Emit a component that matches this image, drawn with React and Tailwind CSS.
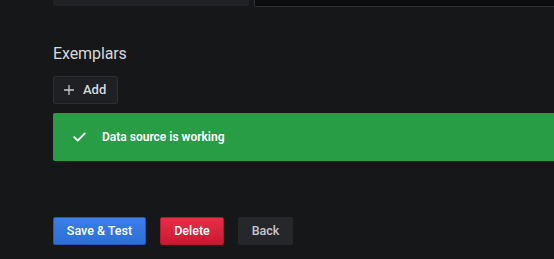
export default function App() {
  return (
    <div
      className="w-[554px] h-[259px] overflow-hidden bg-[#161719] text-[#d8d9da]"
      style={{ fontFamily: "Roboto, 'Liberation Sans', sans-serif" }}
    >
      <div className="flex pl-[53px] gap-[5px] h-[7px]">
        <div className="w-[196px] h-[6px] bg-[#202226] rounded-b-[2px]" />
        <div className="flex-1 h-[7px] bg-[#0b0c0e] border-l border-b border-[#2c2e33] rounded-bl-[2px]" />
      </div>

      <div className="px-[53px]">
        <h3 className="mt-[35px] text-[16px] leading-[24px] tracking-[-0.1px] text-[#d8d9da]">Exemplars</h3>

        <button className="mt-[10px] h-[28px] w-[65px] flex items-center gap-[8px] pl-[9px] bg-[#1f2024] border border-[#2c2e33] rounded-[2px] text-[13px] font-medium text-[#d8d9da]">
          <svg width="12" height="12" viewBox="0 0 12 12" fill="none" stroke="#c7c8cb" strokeWidth="1.3">
            <path d="M6 1v10M1 6h10" />
          </svg>
          Add
        </button>
      </div>

      <div className="ml-[53px] mt-[9px] h-[48px] bg-[#299c46] rounded-l-[2px] flex items-center pl-[20px] gap-[16px] text-white">
        <svg width="13" height="10" viewBox="0 0 13 10" fill="none" stroke="white" strokeWidth="1.8" strokeLinecap="round" strokeLinejoin="round">
          <path d="M1.2 5.2l3.5 3.5L11.8 1.4" />
        </svg>
        <span className="text-[12px] font-semibold">Data source is working</span>
      </div>

      <div className="flex gap-[14px] pl-[53px] mt-[56px]">
        <button className="h-[28px] w-[93px] rounded-[2px] bg-gradient-to-b from-[#3a7ee6] to-[#2d6fd6] border border-[#1f5bb8] text-white text-[12.5px] font-medium">
          Save &amp; Test
        </button>
        <button className="h-[28px] w-[64px] rounded-[2px] bg-gradient-to-b from-[#e52e47] to-[#c91a31] border border-[#b8172b] text-white text-[12.5px] font-medium">
          Delete
        </button>
        <button className="h-[28px] w-[55px] rounded-[2px] bg-[#26272b] text-[#c7c8cb] text-[12.5px] font-medium">
          Back
        </button>
      </div>
    </div>
  );
}
